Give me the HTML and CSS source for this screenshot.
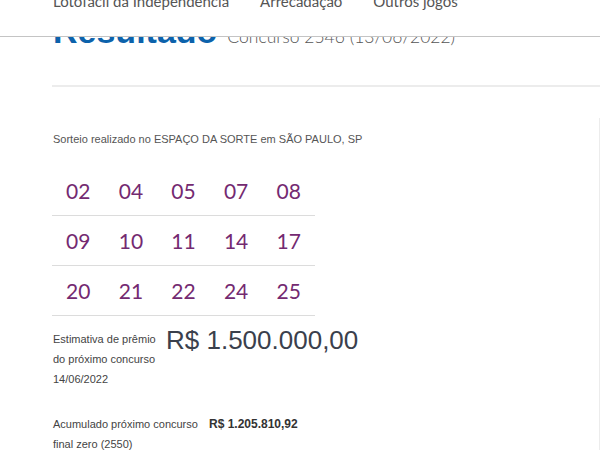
FILE: index.html
```html
<!DOCTYPE html>
<html lang="pt-BR">
<head>
  <meta charset="UTF-8">
  <meta name="viewport" content="width=device-width, initial-scale=1.0">
  <title>Lotofácil - Resultado</title>
  <link rel="stylesheet" href="styles.css">
</head>
<body>
  <header class="topbar">
    <nav class="topnav">
      <a href="#">Lotofácil da Independência</a>
      <a href="#">Arrecadação</a>
      <a href="#">Outros jogos</a>
    </nav>
  </header>

  <main class="page">
    <div class="title-row">
      <h1>Resultado</h1>
      <span class="concurso">Concurso 2546 (13/06/2022)</span>
    </div>

    <div class="body-row">
      <section class="resultado">
        <p class="local">Sorteio realizado no ESPAÇO DA SORTE em SÃO PAULO, SP</p>

        <ul class="dezenas">
          <li>02</li><li>04</li><li>05</li><li>07</li><li>08</li>
          <li>09</li><li>10</li><li>11</li><li>14</li><li>17</li>
          <li>20</li><li>21</li><li>22</li><li>24</li><li>25</li>
        </ul>

        <div class="estimativa">
          <p class="estimativa-label">Estimativa de prêmio<br>do próximo concurso<br>14/06/2022</p>
          <p class="estimativa-valor">R$ 1.500.000,00</p>
        </div>

        <div class="acumulado">
          <p>Acumulado próximo concurso <strong>R$ 1.205.810,92</strong></p>
          <p>final zero (2550)</p>
        </div>
      </section>
      <aside class="lateral"></aside>
    </div>
  </main>
</body>
</html>
```

FILE: styles.css
```css
html, body {
  overflow: hidden;
}
body {
  margin: 0;
  font-family: "Liberation Sans", Arial, sans-serif;
  background-color: #FFFFFF;
  color: #555;
}
.topbar {
  position: fixed;
  top: 0;
  left: 0;
  right: 0;
  height: 36px;
  background-color: #fff;
  border-bottom: 1px solid #c4c4c4;
  overflow: hidden;
  z-index: 10;
}
.topnav {
  display: flex;
  gap: 31px;
  padding-left: 53px;
  margin-top: -9px;
}
.topnav a {
  font-family: Lato, "Open Sans", sans-serif;
  font-size: 15px;
  line-height: 20px;
  color: #555;
  text-decoration: none;
}
.page {
  padding-left: 52px;
}
.title-row {
  display: flex;
  align-items: baseline;
  gap: 10px;
  padding: 11px 0 34px 1px;
  border-bottom: 2px solid #ececec;
}
h1 {
  margin: 0;
  font-size: 34px;
  line-height: 40px;
  font-weight: bold;
  color: #0c62ab;
}
.concurso {
  font-family: Lato, "Open Sans", sans-serif;
  font-size: 17.5px;
  font-weight: 300;
  color: #555;
}
.body-row {
  display: flex;
}
.resultado {
  width: 547px;
}
.lateral {
  flex: 1;
  margin-top: 31px;
  border-left: 1px solid #ececec;
}
.local {
  margin: 44px 0 0 1px;
  font-size: 11px;
  line-height: 16px;
  color: #555;
}
.dezenas {
  list-style: none;
  margin: 19px 0 0;
  padding: 0;
  width: 263px;
  display: grid;
  grid-template-columns: repeat(5, 1fr);
}
.dezenas li {
  height: 49px;
  line-height: 49px;
  text-align: center;
  font-family: Lato, "Open Sans", sans-serif;
  font-size: 21px;
  color: #742a71;
  border-bottom: 1px solid #dcdcdc;
}
.estimativa {
  display: flex;
  align-items: flex-start;
  margin-top: 13px;
}
.estimativa-label {
  margin: 0 0 0 1px;
  width: 113px;
  font-size: 11px;
  line-height: 20px;
  color: #444;
}
.estimativa-valor {
  margin: -2px 0 0;
  font-size: 26px;
  line-height: 26px;
  color: #3a404c;
}
.acumulado {
  margin-top: 25px;
  font-size: 11px;
  line-height: 20px;
  color: #444;
}
.acumulado p {
  margin: 0 0 0 1px;
}
.acumulado strong {
  margin-left: 8px;
  font-size: 12px;
  color: #333;
}
```
